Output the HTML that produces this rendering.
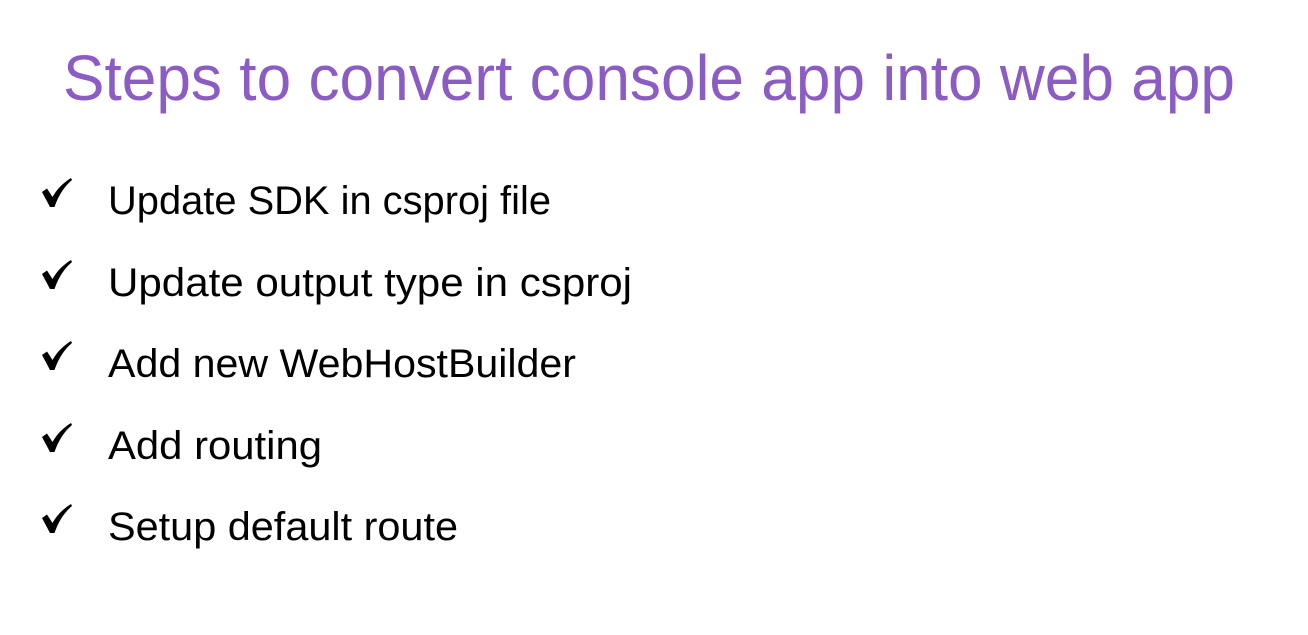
<!DOCTYPE html>
<html><head><meta charset="utf-8"><style>
html,body{margin:0;padding:0;background:#fff;width:1308px;height:635px;overflow:hidden}
</style></head><body>
<svg width="1308" height="635" xmlns="http://www.w3.org/2000/svg" font-family="Liberation Sans, sans-serif">
<text x="63" y="100" font-size="64" fill="#8a5cc4" textLength="1172" lengthAdjust="spacingAndGlyphs">Steps to convert console app into web app</text>
<g fill="#000" font-size="40">
<text x="108" y="214" textLength="443" lengthAdjust="spacingAndGlyphs">Update SDK in csproj file</text>
<text x="108" y="296" textLength="524" lengthAdjust="spacingAndGlyphs">Update output type in csproj</text>
<text x="108" y="377" textLength="468" lengthAdjust="spacingAndGlyphs">Add new WebHostBuilder</text>
<text x="108" y="459" textLength="214" lengthAdjust="spacingAndGlyphs">Add routing</text>
<text x="108" y="540" textLength="350" lengthAdjust="spacingAndGlyphs">Setup default route</text>
</g>
<defs><path id="ck" d="M0 13 L5 9.5 L10.5 18 C15 10 21 4 29 -1 L30 1 C23 7 17 15 12.5 28 L8 28 Z"/></defs>
<use href="#ck" x="42" y="179"/>
<use href="#ck" x="42" y="261"/>
<use href="#ck" x="42" y="342"/>
<use href="#ck" x="42" y="424"/>
<use href="#ck" x="42" y="505"/>
</svg>
</body></html>
